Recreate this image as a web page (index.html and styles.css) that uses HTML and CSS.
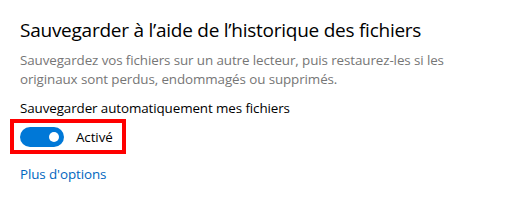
FILE: index.html
```html
<!DOCTYPE html>
<html lang="fr">
<head>
  <meta charset="UTF-8" />
  <title>Sauvegarde</title>
  <link rel="stylesheet" href="styles.css">
</head>
<body>
  <div class="page">
    <h2>Sauvegarder à l’aide de l’historique des fichiers</h2>
    <p class="desc">Sauvegardez vos fichiers sur un autre lecteur, puis restaurez-les si les originaux sont perdus, endommagés ou supprimés.</p>
    <p class="label">Sauvegarder automatiquement mes fichiers</p>
    <div class="highlight">
      <span class="toggle"><span class="knob"></span></span>
      <span class="state">Activé</span>
    </div>
    <a class="link" href="#">Plus d'options</a>
  </div>
</body>
</html>
```
FILE: styles.css
```css
body {
  margin: 0;
  background: #fff;
  font-family: "Open Sans", "Noto Sans", sans-serif;
  color: #000;
}

.page {
  padding: 16px 20px 0 20px;
}

h2 {
  margin: 0;
  font-size: 19px;
  font-weight: normal;
  line-height: 28px;
  letter-spacing: -0.25px;
}

.desc {
  margin: 7px 0 0 0;
  width: 440px;
  font-size: 13.4px;
  line-height: 19px;
  letter-spacing: -0.1px;
  color: #767676;
}

.label {
  margin: 10px 0 0 0;
  font-size: 13.4px;
  line-height: 19px;
  letter-spacing: -0.1px;
}

.highlight {
  display: inline-flex;
  align-items: center;
  gap: 12px;
  margin: 1px 0 0 -10px;
  padding: 4px 9px 3px 6px;
  border: 4px solid #f00;
}

.toggle {
  display: flex;
  align-items: center;
  justify-content: flex-end;
  width: 44px;
  height: 20px;
  padding: 0 5px;
  box-sizing: border-box;
  border-radius: 10px;
  background: #0078d7;
}

.knob {
  width: 10px;
  height: 10px;
  border-radius: 50%;
  background: #fff;
}

.state {
  font-size: 13.4px;
  line-height: 20px;
  letter-spacing: -0.1px;
}

.link {
  display: block;
  margin-top: 11px;
  font-size: 13.4px;
  line-height: 19px;
  letter-spacing: -0.1px;
  color: #0067c0;
  text-decoration: none;
}
```
